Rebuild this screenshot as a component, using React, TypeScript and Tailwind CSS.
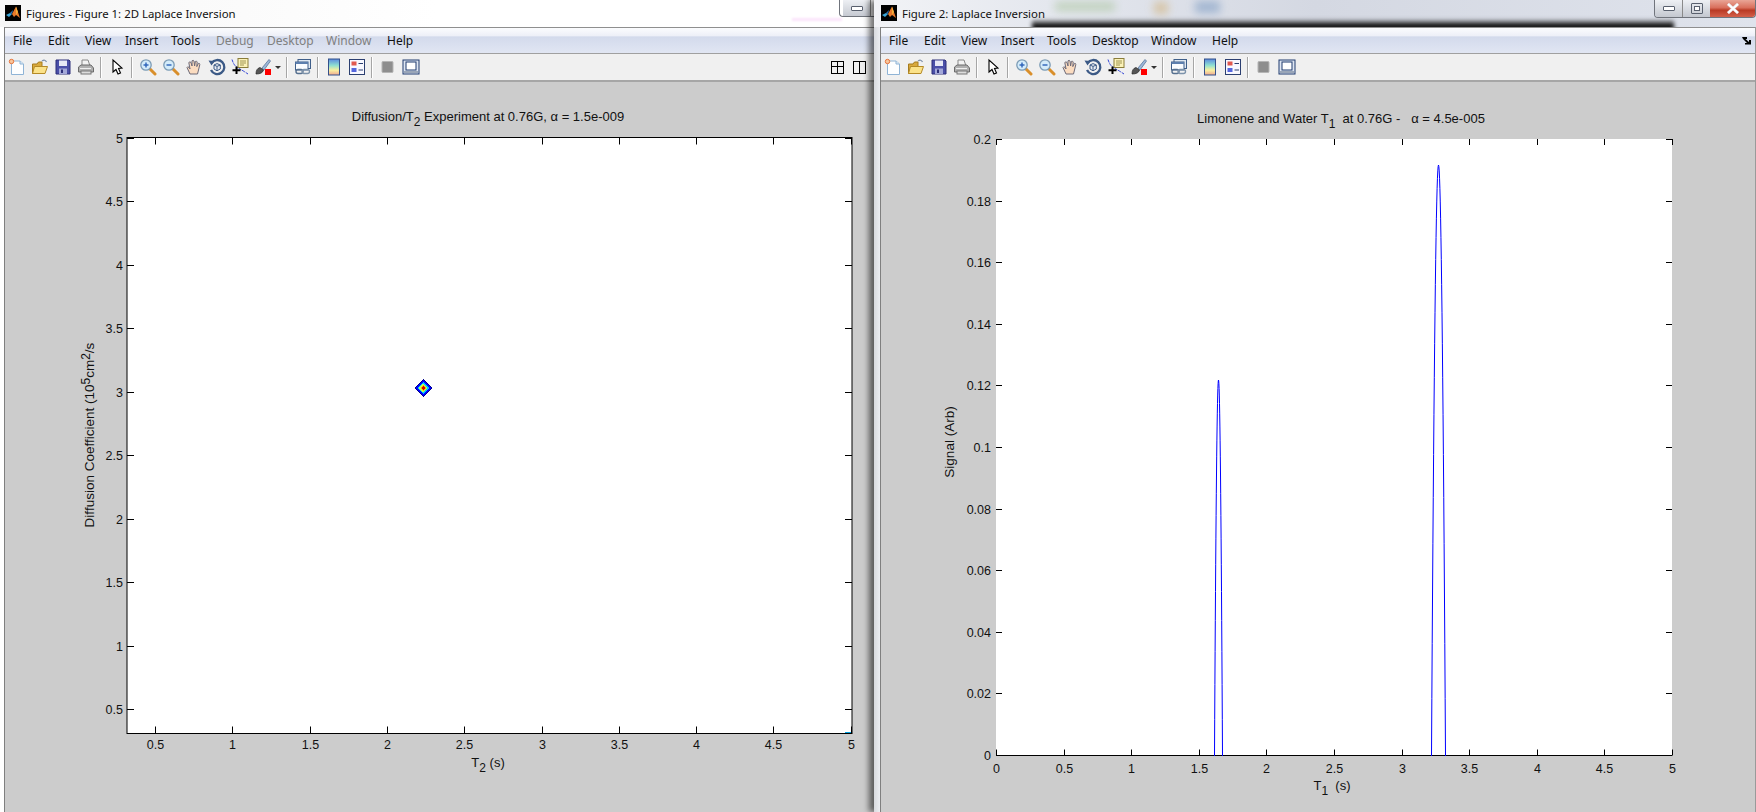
import type { ReactNode } from 'react'

const uiFont = "font-['Noto_Sans',sans-serif]"

function Logo() {
  return (
    <svg width="16" height="16" viewBox="0 0 16 16" className="flex-none">
      <rect width="16" height="16" fill="#000" />
      <path d="M1 10 L5 8 L7 9 L4 12 Z" fill="#3aa6d8" />
      <path d="M5 8 L8 5 L7 9 Z" fill="#2c6fb0" />
      <path d="M7 9 L11 1.5 L15 13 L11 10 L9 12 Z" fill="#e8792b" />
      <path d="M11 1.5 L13 7 L11 10 Z" fill="#f2b13a" />
    </svg>
  )
}

function Icon({ children }: { children: ReactNode }) {
  return (
    <svg width="18" height="18" viewBox="0 0 18 18">
      {children}
    </svg>
  )
}

const Lens = ({ sign }: { sign: 'plus' | 'minus' }) => (
  <Icon>
    <path d="M10.5 10.5 L16 16" stroke="#d98f2b" strokeWidth="3" strokeLinecap="round" />
    <circle cx="7" cy="7" r="5.2" fill="#d4ecfa" stroke="#7b9bb5" strokeWidth="1.3" />
    <path d="M4.5 7 H9.5" stroke="#2a62b8" strokeWidth="1.4" />
    {sign === 'plus' && <path d="M7 4.5 V9.5" stroke="#2a62b8" strokeWidth="1.4" />}
  </Icon>
)

const icons: Record<string, ReactNode> = {
  new: (
    <Icon>
      <path d="M3.5 3 H12 L15.5 6 V16.5 H3.5 Z" fill="#fdfeff" stroke="#8fb4d6" />
      <path d="M12 3 V6 H15.5" fill="#dbe9f5" stroke="#8fb4d6" />
      <circle cx="3.5" cy="3.5" r="2.2" fill="#f7c79d" stroke="#e8743b" />
    </Icon>
  ),
  open: (
    <Icon>
      <path d="M1.5 6 H6 L7.5 4 H11 V15.5 H1.5 Z" fill="#d9a93c" stroke="#a67c1e" />
      <path d="M1.5 15.5 L3.5 8.5 H16.5 L14 15.5 Z" fill="#fbe289" stroke="#b58a26" />
      <path d="M11 3 Q14 1 15.5 4" fill="none" stroke="#7d8fa8" strokeWidth="1.2" />
    </Icon>
  ),
  save: (
    <Icon>
      <path d="M2 2 H15 L16 3 V16 H2 Z" fill="#4a4fa8" stroke="#2c2f78" />
      <rect x="5" y="2.5" width="8" height="5.5" fill="#e6e8f5" />
      <rect x="5" y="10.5" width="8" height="5.5" fill="#a3a8d8" />
      <rect x="7" y="11.5" width="2" height="3.5" fill="#2c2f78" />
    </Icon>
  ),
  print: (
    <Icon>
      <path d="M5 2 H11 L13 8 H5 Z" fill="#f2f2f2" stroke="#888" />
      <path d="M1.5 9 L4 7 H14 L16.5 10 V14 H1.5 Z" fill="#b0b0b0" stroke="#6b6b6b" />
      <rect x="4" y="13" width="10" height="3" fill="#dcdcdc" stroke="#777" />
      <path d="M3 10.5 H14" stroke="#eee" />
    </Icon>
  ),
  arrow: (
    <Icon>
      <path d="M5 2 V14 L8 11.5 L10 16 L12.5 15 L10.5 10.5 L14 10 Z" fill="#fff" stroke="#000" strokeWidth="1.1" />
    </Icon>
  ),
  zoomIn: <Lens sign="plus" />,
  zoomOut: <Lens sign="minus" />,
  hand: (
    <Icon>
      <path
        d="M5 16 L2 9.5 Q2.5 8 4 9.5 L5 11 L3.8 4.5 Q5 3.2 6 4.5 L7 8 L7 2.8 Q8.3 1.8 9 3 L9.6 8 L10.4 3.4 Q11.7 2.7 12.2 4 L11.8 8.6 L13.4 5.4 Q14.8 5 14.8 6.6 L13.5 12 L12.5 16 Z"
        fill="#fbdcc0"
        stroke="#6d6a78"
      />
    </Icon>
  ),
  rotate: (
    <Icon>
      <path d="M3.6 5 A7 7 0 1 1 3 12" fill="none" stroke="#3c5a86" strokeWidth="2.3" />
      <path d="M0.5 2.5 L6.5 3 L3.5 7.5 Z" fill="#3c5a86" />
      <path d="M6 7 L9 5.6 L12.3 7 V11 L9 12.8 L6 11 Z" fill="#e9eef5" stroke="#3c5a86" />
      <path d="M6 7 L9 8.4 L12.3 7 M9 8.4 V12.8" fill="none" stroke="#3c5a86" />
    </Icon>
  ),
  cursor: (
    <Icon>
      <path d="M1 1.5 Q3 8 7 10 T17 16" fill="none" stroke="#1a2fd0" strokeWidth="0.9" strokeDasharray="3 1" />
      <rect x="7" y="0.5" width="10" height="9" fill="#fbf2b8" stroke="#8a7d3a" />
      <path d="M9 3 H15 M9 5 H15 M9 7 H13" stroke="#8a7d3a" strokeWidth="0.8" />
      <path d="M5.5 8.5 V16 M1.5 12.2 H9.5" stroke="#000" strokeWidth="2" />
    </Icon>
  ),
  brush: (
    <Icon>
      <path d="M8 10 L15 1.5 L16.5 3 L10 12 Z" fill="#9cb7d8" stroke="#4b6a92" strokeWidth="0.7" />
      <path d="M2 16 Q2 10.5 6 9.5 L9.5 12 Q8.5 16 2 16 Z" fill="#555" stroke="#222" strokeWidth="0.7" />
      <rect x="11" y="11" width="6" height="6" fill="#f00" />
    </Icon>
  ),
  link: (
    <Icon>
      <rect x="4" y="1.5" width="12.5" height="9" fill="#dfe8f2" stroke="#3f5f8a" />
      <rect x="1.5" y="4" width="12.5" height="8" fill="#fafcff" stroke="#3f5f8a" />
      <rect x="1.5" y="4" width="12.5" height="2" fill="#5d7fae" />
      <rect x="2" y="11.5" width="7" height="4" rx="2" fill="none" stroke="#56708f" strokeWidth="1.4" />
      <rect x="8" y="11.5" width="7.5" height="4" rx="2" fill="none" stroke="#7d93ab" strokeWidth="1.4" />
    </Icon>
  ),
  colorbar: (
    <svg width="18" height="18" viewBox="0 0 18 18">
      <defs>
        <linearGradient id="cb" x1="0" y1="0" x2="0" y2="1">
          <stop offset="0" stopColor="#5a8ae0" />
          <stop offset="0.4" stopColor="#8fe0d0" />
          <stop offset="0.7" stopColor="#f8f0a0" />
          <stop offset="1" stopColor="#f0a890" />
        </linearGradient>
      </defs>
      <rect x="3.5" y="1" width="11" height="16" fill="url(#cb)" stroke="#33508a" />
    </svg>
  ),
  legend: (
    <Icon>
      <rect x="1.5" y="1.5" width="15" height="15" fill="#f8f8ff" stroke="#2b3f70" />
      <rect x="3.5" y="3.5" width="5" height="4" fill="#e0584f" />
      <rect x="3.5" y="10" width="5" height="4" fill="#5566dd" />
      <path d="M10.5 5.5 H15 M10.5 12 H15" stroke="#2b3f70" strokeWidth="1.2" />
    </Icon>
  ),
  hide: (
    <Icon>
      <rect x="3" y="3.5" width="11" height="11" rx="1" fill="#8e8e8e" stroke="#b5b5b5" />
    </Icon>
  ),
  tools: (
    <Icon>
      <rect x="1" y="2" width="16" height="14" fill="#dfe6f2" stroke="#1f3a6e" />
      <rect x="4" y="4" width="10" height="8" fill="#fff" stroke="#1f3a6e" />
      <rect x="2" y="13" width="14" height="2" fill="#9aa6b8" />
    </Icon>
  ),
}

function Tool({ name }: { name: string }) {
  return <div className="flex h-[26px] w-[23px] flex-none items-center justify-center">{icons[name]}</div>
}

function Sep() {
  return <div className="mx-[3px] h-[21px] w-[2px] flex-none border-r border-white bg-[#a6a6a6]" />
}

function Toolbar({ right }: { right?: ReactNode }) {
  return (
    <div className="flex h-[26px] flex-none items-center border-b-0 bg-[#f0f0f0]">
      {['new', 'open', 'save', 'print'].map((n) => (
        <Tool key={n} name={n} />
      ))}
      <Sep />
      <Tool name="arrow" />
      <Sep />
      {['zoomIn', 'zoomOut', 'hand', 'rotate', 'cursor', 'brush'].map((n) => (
        <Tool key={n} name={n} />
      ))}
      <div className="ml-[1px] h-0 w-0 flex-none border-x-[3px] border-t-[3px] border-x-transparent border-t-[#333]" />
      <div className="w-[2px] flex-none" />
      <Sep />
      <Tool name="link" />
      <Sep />
      <Tool name="colorbar" />
      <Tool name="legend" />
      <Sep />
      <Tool name="hide" />
      <Tool name="tools" />
      {right}
    </div>
  )
}

type MenuItem = { label: string; w: number; off?: boolean }

function MenuBar({ items, right }: { items: MenuItem[]; right?: ReactNode }) {
  return (
    <div className="flex h-[27px] flex-none items-center border-y border-y-[#8f8f8f] border-b-[#a0a0a0] bg-[linear-gradient(#fbfcfe_0%,#eef0f8_30%,#d3daec_36%,#e1e6f3_100%)] pl-[8px]">
      {items.map((m) => (
        <div
          key={m.label}
          style={{ width: m.w }}
          className={`flex-none pt-[1px] text-[12px] leading-none ${uiFont} ${m.off ? 'text-[#808080]' : 'text-[#111]'}`}
        >
          {m.label}
        </div>
      ))}
      {right}
    </div>
  )
}

function Controls({ full }: { full?: boolean }) {
  const min = (
    <div className="flex h-[17px] w-[28px] items-center justify-center border-r border-r-[#8a8a8a] bg-gradient-to-b from-[#eef0f4] to-[#c4c8d0]">
      <div className="h-[5px] w-[12px] rounded-[1px] border border-[#59606e] bg-white" />
    </div>
  )
  if (!full) {
    return (
      <div className="flex h-[17px] w-[35px] flex-none overflow-hidden rounded-bl-[4px] border-b border-l border-[#70747c] bg-white pl-[3px]">
        {min}
      </div>
    )
  }
  return (
    <div className="relative flex h-[18px] w-[102px] flex-none overflow-hidden rounded-b-[4px] border-x border-b border-[#70747c]">
      {min}
      <div className="flex h-[17px] w-[27px] items-center justify-center bg-gradient-to-b from-[#eef0f4] to-[#c4c8d0]">
        <div className="flex h-[11px] w-[12px] items-center justify-center rounded-[1px] border border-[#59606e]">
          <div className="h-[5px] w-[6px] border border-[#59606e] bg-white" />
        </div>
      </div>
      <div className="flex h-[17px] flex-1 items-center justify-center bg-[linear-gradient(#e9a596_0%,#d96f5c_45%,#b93a24_60%,#d4604a_100%)]">
        <svg width="14" height="11" viewBox="0 0 14 11">
          <path d="M2 1 L12 10 M12 1 L2 10" stroke="#e8eaf0" strokeWidth="3" />
          <path d="M2 1 L12 10 M12 1 L2 10" stroke="#fff" strokeWidth="1.6" />
        </svg>
      </div>
    </div>
  )
}

const FONT = "'Liberation Sans', Arial, sans-serif"

function Label({
  x,
  y,
  anchor = 'middle',
  size = 12.5,
  children,
  rotate,
}: {
  x: number
  y: number
  anchor?: 'start' | 'middle' | 'end'
  size?: number
  children: ReactNode
  rotate?: boolean
}) {
  return (
    <text
      x={x}
      y={y}
      textAnchor={anchor}
      fontFamily={FONT}
      fontSize={size}
      fill="#111"
      xmlSpace="preserve"
      transform={rotate ? `rotate(-90 ${x} ${y})` : undefined}
    >
      {children}
    </text>
  )
}

function Sub({ children }: { children: ReactNode }) {
  return (
    <>
      <tspan dy="5" fontSize="12">
        {children}
      </tspan>
      <tspan dy="-5"> </tspan>
    </>
  )
}

const range = (n: number) => Array.from({ length: n }, (_, i) => i)

function DiffusionPlot() {
  const L = 127
  const R = 852
  const T = 137.5
  const B = 733.5
  const xs = range(10).map((i) => ({ v: (i + 1) * 0.5, x: Math.round(155 + i * 77.3) + 0.5 }))
  const ys = range(10).map((i) => ({ v: (i + 1) * 0.5, y: Math.round(709 - i * 63.5) + 0.5 }))
  const diamonds: [number, string][] = [
    [9, '#00008f'],
    [8, '#0000ff'],
    [6, '#00c8ff'],
    [4.5, '#c8ff50'],
    [3, '#ffb000'],
    [2, '#d00000'],
  ]
  return (
    <svg width="869" height="730" viewBox="5 82 869 730" className="block">
      <rect x={L} y={T} width={R - L} height={B - T} fill="#fff" stroke="#000" />
      {xs.map((t) => (
        <g key={t.v}>
          <path d={`M${t.x} ${T} v7 M${t.x} ${B} v-7`} stroke="#000" />
          <Label x={t.x} y={749}>
            {t.v}
          </Label>
        </g>
      ))}
      {ys.map((t) => (
        <g key={t.v}>
          <path d={`M${L} ${t.y} h7 M${R} ${t.y} h-7`} stroke="#000" />
          <Label x={123} y={t.y + 4} anchor="end">
            {t.v}
          </Label>
        </g>
      ))}
      <path d="M845 732.5 h6" stroke="#00a0e0" />
      {diamonds.map(([r, c]) => (
        <path key={c} shapeRendering="crispEdges" d={`M423 ${388 - r} L${423 + r} 388 L423 ${388 + r} L${423 - r} 388 Z`} fill={c} />
      ))}
      <Label x={488} y={121} size={13}>
        Diffusion/T<Sub>2</Sub>Experiment at 0.76G, α = 1.5e-009
      </Label>
      <Label x={488} y={767} size={13}>
        T<Sub>2</Sub>(s)
      </Label>
      <Label x={94} y={435} size={13.5} rotate>
        Diffusion Coefficient (10
        <tspan dy="-4" fontSize="12">
          5
        </tspan>
        <tspan dy="4">cm</tspan>
        <tspan dy="-4" fontSize="12">
          2
        </tspan>
        <tspan dy="4">/s</tspan>
      </Label>
    </svg>
  )
}

function peak(cx: number, top: number, w: number) {
  const B = 756
  const pts = range(41).map((i) => {
    const dx = -w + (i * w) / 20
    return `${(cx + dx).toFixed(2)} ${(B - (B - top) * (1 - (dx / w) ** 2)).toFixed(2)}`
  })
  return `M${pts.join(' L')}`
}

function SignalPlot() {
  const L = 995
  const R = 1671
  const T = 139
  const B = 755.5
  const xs = range(11).map((i) => ({ v: i * 0.5, x: Math.round(L + i * 67.6) + 0.5 }))
  const ys = range(11).map((i) => ({ v: +(i * 0.02).toFixed(2), y: Math.round(755 - i * 61.6) + 0.5 }))
  return (
    <svg width="875" height="730" viewBox="880 82 875 730" className="block">
      <rect x={L} y={T} width={R - L} height={B - T} fill="#fff" />
      <path d={`M${L} ${B} H${R}`} stroke="#000" />
      {xs.map((t) => (
        <g key={t.v}>
          <path d={`M${t.x} ${T} v6 M${t.x} ${B} v-6`} stroke="#000" />
          <Label x={t.x} y={773}>
            {t.v}
          </Label>
        </g>
      ))}
      {ys.map((t) => (
        <g key={t.v}>
          <path d={`M${L} ${t.y} h6 M${R} ${t.y} h-6`} stroke="#000" />
          <Label x={990} y={t.y + 4} anchor="end">
            {t.v}
          </Label>
        </g>
      ))}
      <path d={peak(1217.5, 380, 4)} fill="none" stroke="#0000ff" />
      <path d={peak(1437.5, 165, 7)} fill="none" stroke="#0000ff" />
      <Label x={1340} y={123} size={13}>
        Limonene and Water T<Sub>1</Sub> at 0.76G -   α = 4.5e-005
      </Label>
      <Label x={1331} y={790} size={13}>
        T<Sub>1</Sub> (s)
      </Label>
      <Label x={953} y={442} size={13.5} rotate>
        Signal (Arb)
      </Label>
    </svg>
  )
}

const leftMenu: MenuItem[] = [
  { label: 'File', w: 35 },
  { label: 'Edit', w: 37 },
  { label: 'View', w: 40 },
  { label: 'Insert', w: 46 },
  { label: 'Tools', w: 45 },
  { label: 'Debug', w: 51, off: true },
  { label: 'Desktop', w: 59, off: true },
  { label: 'Window', w: 61, off: true },
  { label: 'Help', w: 40 },
]

const rightMenu: MenuItem[] = [
  { label: 'File', w: 35 },
  { label: 'Edit', w: 37 },
  { label: 'View', w: 40 },
  { label: 'Insert', w: 46 },
  { label: 'Tools', w: 45 },
  { label: 'Desktop', w: 59 },
  { label: 'Window', w: 61 },
  { label: 'Help', w: 40 },
]

export default function App() {
  return (
    <div className="flex h-[812px] w-[1756px] overflow-hidden bg-white">
      {/* figure 1 */}
      <div className="flex w-[874px] flex-none flex-col">
        <div className="relative flex h-[27px] flex-none items-start bg-gradient-to-r from-[#f6f6f6] via-white to-white">
          <div className="ml-[5px] mt-[5px]">
            <Logo />
          </div>
          <div className={`ml-[5px] mt-[6px] text-[11.4px] leading-[16px] text-[#111] ${uiFont}`}>
            Figures - Figure 1: 2D Laplace Inversion
          </div>
          <div className="absolute left-[792px] top-[18px] h-[3px] w-[50px] bg-[#fbe4fb] blur-[1px]" />
          <div className="ml-auto">
            <Controls />
          </div>
        </div>
        <div className="ml-[4px] flex min-h-0 flex-1 flex-col border-l border-l-[#7f7f7f]">
          <MenuBar items={leftMenu} />
          <Toolbar
            right={
              <div className="ml-auto mr-[8px] flex gap-[9px]">
                <div className="grid h-[13px] w-[13px] grid-cols-2 grid-rows-2 border border-black">
                  <div className="border-b border-r border-black" />
                  <div className="border-b border-black" />
                  <div className="border-r border-black" />
                  <div />
                </div>
                <div className="grid h-[13px] w-[13px] grid-cols-2 border border-black">
                  <div className="border-r border-black" />
                  <div />
                </div>
              </div>
            }
          />
          <div className="min-h-0 flex-1 border-t-2 border-t-[#a6a6a6] bg-[#cccccc]">
            <DiffusionPlot />
          </div>
        </div>
      </div>

      {/* figure 2, lies over the first one */}
      <div className="relative z-10 flex min-w-0 flex-1 flex-col shadow-[-5px_0_6px_rgba(0,0,0,0.55)]">
        <div className="relative flex h-[27px] flex-none items-start overflow-hidden bg-[linear-gradient(90deg,#f2f3f6_0%,#e4e7ee_20%,#d4d8e2_50%,#dfe3ec_100%)]">
          <div className="ml-[7px] mt-[5px]">
            <Logo />
          </div>
          <div className={`ml-[5px] mt-[6px] text-[11.4px] leading-[16px] text-[#111] ${uiFont}`}>
            Figure 2: Laplace Inversion
          </div>
          <div className="absolute -bottom-[3px] left-[158px] right-[82px] h-[11px] bg-gradient-to-b from-[#55555500] via-[#222] to-black blur-[2px]" />
          <div className="absolute left-[181px] top-[2px] h-[9px] w-[60px] bg-[#a9c49b] opacity-60 blur-[4px]" />
          <div className="absolute left-[280px] top-[2px] h-[12px] w-[14px] bg-[#d4b98a] opacity-70 blur-[4px]" />
          <div className="absolute left-[321px] top-[1px] h-[12px] w-[25px] bg-[#8aa5c8] opacity-70 blur-[4px]" />
          <div className="ml-auto">
            <Controls full />
          </div>
        </div>
        <div className="flex min-h-0 flex-1">
          <div className="w-[6px] flex-none bg-gradient-to-r from-[#d8dade] to-[#eceef2]" />
          <div className="flex min-w-0 flex-1 flex-col border-x border-l-[#7f7f7f] border-r-[#9a9a9a]">
            <MenuBar
              items={rightMenu}
              right={
                <svg width="10" height="9" viewBox="0 0 10 9" className="ml-auto mr-[3px] mb-[1px]">
                  <path d="M0 1 H5 V3 H3.5 L7 6 V4 H9 V8.5 H3 V7 H5 L1 3 Z" fill="#000" />
                </svg>
              }
            />
            <Toolbar />
            <div className="min-h-0 flex-1 border-t-2 border-t-[#a6a6a6] bg-[#cccccc]">
              <SignalPlot />
            </div>
          </div>
        </div>
      </div>
    </div>
  )
}
